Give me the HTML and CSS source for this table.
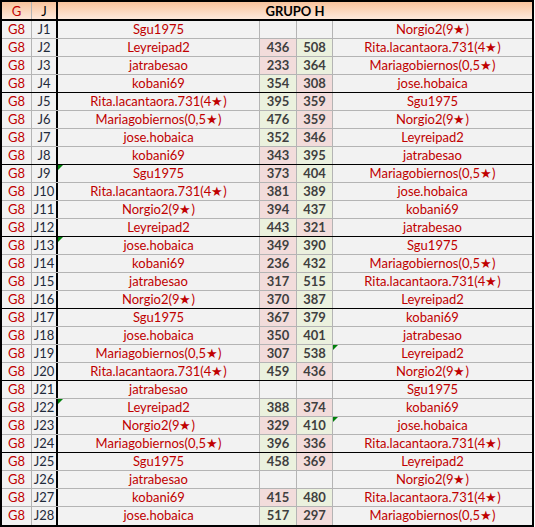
FILE: index.html
```html
<!DOCTYPE html>
<html lang="es">
<head>
<meta charset="utf-8">
<title>Grupo H</title>
<link rel="stylesheet" href="styles.css">
</head>
<body>
<div class="sheet">
  <div class="row head">
    <div class="c g hg">G</div>
    <div class="c j hj">J</div>
    <div class="c title">GRUPO H</div>
  </div>

  <div class="row"><div class="c g">G8</div><div class="c j">J1</div><div class="c n">Sgu1975</div><div class="c s"></div><div class="c s"></div><div class="c n2">Norgio2(9★)</div></div>
  <div class="row"><div class="c g">G8</div><div class="c j">J2</div><div class="c n">Leyreipad2</div><div class="c s lo">436</div><div class="c s hi">508</div><div class="c n2">Rita.lacantaora.731(4★)</div></div>
  <div class="row"><div class="c g">G8</div><div class="c j">J3</div><div class="c n">jatrabesao</div><div class="c s lo">233</div><div class="c s hi">364</div><div class="c n2">Mariagobiernos(0,5★)</div></div>
  <div class="row sep"><div class="c g">G8</div><div class="c j">J4</div><div class="c n">kobani69</div><div class="c s hi">354</div><div class="c s lo">308</div><div class="c n2">jose.hobaica</div></div>

  <div class="row"><div class="c g">G8</div><div class="c j">J5</div><div class="c n">Rita.lacantaora.731(4★)</div><div class="c s hi">395</div><div class="c s lo">359</div><div class="c n2">Sgu1975</div></div>
  <div class="row"><div class="c g">G8</div><div class="c j">J6</div><div class="c n">Mariagobiernos(0,5★)</div><div class="c s hi">476</div><div class="c s lo">359</div><div class="c n2">Norgio2(9★)</div></div>
  <div class="row"><div class="c g">G8</div><div class="c j">J7</div><div class="c n">jose.hobaica</div><div class="c s hi">352</div><div class="c s lo">346</div><div class="c n2">Leyreipad2</div></div>
  <div class="row sep"><div class="c g">G8</div><div class="c j">J8</div><div class="c n">kobani69</div><div class="c s lo">343</div><div class="c s hi">395</div><div class="c n2">jatrabesao</div></div>

  <div class="row"><div class="c g">G8</div><div class="c j">J9</div><div class="c n flag">Sgu1975</div><div class="c s lo">373</div><div class="c s hi">404</div><div class="c n2">Mariagobiernos(0,5★)</div></div>
  <div class="row"><div class="c g">G8</div><div class="c j">J10</div><div class="c n">Rita.lacantaora.731(4★)</div><div class="c s lo">381</div><div class="c s hi">389</div><div class="c n2">jose.hobaica</div></div>
  <div class="row"><div class="c g">G8</div><div class="c j">J11</div><div class="c n">Norgio2(9★)</div><div class="c s lo">394</div><div class="c s hi">437</div><div class="c n2">kobani69</div></div>
  <div class="row sep"><div class="c g">G8</div><div class="c j">J12</div><div class="c n">Leyreipad2</div><div class="c s hi">443</div><div class="c s lo">321</div><div class="c n2">jatrabesao</div></div>

  <div class="row"><div class="c g">G8</div><div class="c j">J13</div><div class="c n flag">jose.hobaica</div><div class="c s lo">349</div><div class="c s hi">390</div><div class="c n2">Sgu1975</div></div>
  <div class="row"><div class="c g">G8</div><div class="c j">J14</div><div class="c n">kobani69</div><div class="c s lo">236</div><div class="c s hi">432</div><div class="c n2">Mariagobiernos(0,5★)</div></div>
  <div class="row"><div class="c g">G8</div><div class="c j">J15</div><div class="c n">jatrabesao</div><div class="c s lo">317</div><div class="c s hi">515</div><div class="c n2">Rita.lacantaora.731(4★)</div></div>
  <div class="row sep"><div class="c g">G8</div><div class="c j">J16</div><div class="c n">Norgio2(9★)</div><div class="c s lo">370</div><div class="c s hi">387</div><div class="c n2">Leyreipad2</div></div>

  <div class="row"><div class="c g">G8</div><div class="c j">J17</div><div class="c n">Sgu1975</div><div class="c s lo">367</div><div class="c s hi">379</div><div class="c n2">kobani69</div></div>
  <div class="row"><div class="c g">G8</div><div class="c j">J18</div><div class="c n">jose.hobaica</div><div class="c s lo">350</div><div class="c s hi">401</div><div class="c n2">jatrabesao</div></div>
  <div class="row"><div class="c g">G8</div><div class="c j">J19</div><div class="c n">Mariagobiernos(0,5★)</div><div class="c s lo">307</div><div class="c s hi">538</div><div class="c n2 flag">Leyreipad2</div></div>
  <div class="row sep"><div class="c g">G8</div><div class="c j">J20</div><div class="c n">Rita.lacantaora.731(4★)</div><div class="c s hi">459</div><div class="c s lo">436</div><div class="c n2">Norgio2(9★)</div></div>

  <div class="row"><div class="c g">G8</div><div class="c j">J21</div><div class="c n">jatrabesao</div><div class="c s"></div><div class="c s"></div><div class="c n2">Sgu1975</div></div>
  <div class="row"><div class="c g">G8</div><div class="c j">J22</div><div class="c n flag">Leyreipad2</div><div class="c s hi">388</div><div class="c s lo">374</div><div class="c n2">kobani69</div></div>
  <div class="row"><div class="c g">G8</div><div class="c j">J23</div><div class="c n">Norgio2(9★)</div><div class="c s lo">329</div><div class="c s hi">410</div><div class="c n2 flag">jose.hobaica</div></div>
  <div class="row sep"><div class="c g">G8</div><div class="c j">J24</div><div class="c n">Mariagobiernos(0,5★)</div><div class="c s hi">396</div><div class="c s lo">336</div><div class="c n2">Rita.lacantaora.731(4★)</div></div>

  <div class="row"><div class="c g">G8</div><div class="c j">J25</div><div class="c n">Sgu1975</div><div class="c s hi">458</div><div class="c s lo">369</div><div class="c n2">Leyreipad2</div></div>
  <div class="row"><div class="c g">G8</div><div class="c j">J26</div><div class="c n">jatrabesao</div><div class="c s"></div><div class="c s"></div><div class="c n2">Norgio2(9★)</div></div>
  <div class="row"><div class="c g">G8</div><div class="c j">J27</div><div class="c n">kobani69</div><div class="c s lo">415</div><div class="c s hi">480</div><div class="c n2">Rita.lacantaora.731(4★)</div></div>
  <div class="row last"><div class="c g">G8</div><div class="c j">J28</div><div class="c n">jose.hobaica</div><div class="c s hi">517</div><div class="c s lo">297</div><div class="c n2">Mariagobiernos(0,5★)</div></div>
</div>
</body>
</html>
```

FILE: styles.css
```css
html, body {
  margin: 0;
  padding: 0;
  background: #ffffff;
}

.sheet {
  box-sizing: border-box;
  width: 534px;
  border: 2px solid #000000;
  font-family: Lato, "Liberation Sans", sans-serif;
  font-size: 13px;
  background: #f2f2f2;
}

.row {
  display: grid;
  grid-template-columns: 30px 26px 202px 37px 36px 199px;
  height: 18px;
  box-sizing: border-box;
  border-bottom: 1px solid #b4b4b4;
}

.row.sep {
  border-bottom-color: #000000;
}

.row.last {
  border-bottom: none;
}

.row.head {
  height: 19px;
  border-bottom: 2px solid #000000;
  grid-template-columns: 30px 26px 474px;
  background: linear-gradient(to bottom, #f8c39c 0%, #fbd8bf 55%, #fde9dc 100%);
}

.c {
  position: relative;
  box-sizing: border-box;
  border-right: 1px solid #b4b4b4;
  text-align: center;
  line-height: 17px;
  white-space: nowrap;
  overflow: hidden;
  color: #c00000;
}

.j {
  border-right: 2px solid #000000;
  color: #1f2a3a;
}

.n2 {
  border-right: none;
}

.s {
  color: #3f3f3f;
  font-weight: 700;
}

.s.hi {
  background: #ebf1de;
}

.s.lo {
  background: #f2dcdb;
}

.head .c {
  line-height: 18px;
}

.hg {
  color: #c00000;
}

.hj {
  color: #000000;
}

.title {
  border-right: none;
  color: #000000;
  font-weight: 700;
}

.flag::before {
  content: "";
  position: absolute;
  left: 0;
  top: 0;
  width: 0;
  height: 0;
  border-top: 5px solid #00800a;
  border-right: 5px solid transparent;
}
```
